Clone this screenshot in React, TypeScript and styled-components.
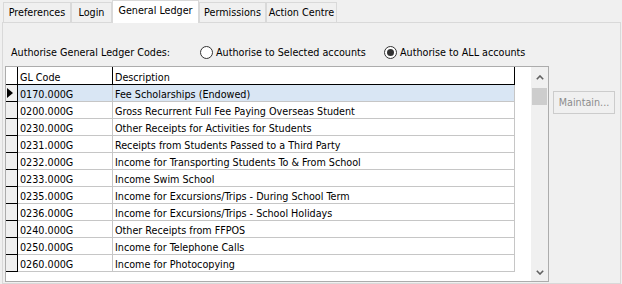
import React from 'react';
import styled, { createGlobalStyle } from 'styled-components';

const GlobalStyle = createGlobalStyle`
  html, body { margin: 0; padding: 0; background: #f0f0f0; }
  body {
    font-family: "DejaVu Sans Condensed", "DejaVu Sans", sans-serif;
    font-size: 10.7px;
    color: #000;
  }
  * { box-sizing: border-box; }
`;

const Window = styled.div`
  width: 622px;
  height: 284px;
  display: flex;
  flex-direction: column;
  overflow: hidden;
  background: #f0f0f0;
`;

const TabBar = styled.div`
  display: flex;
  align-items: flex-end;
  height: 22px;
  padding-left: 3px;
  position: relative;
  z-index: 1;
`;

const Tab = styled.div<{ $active?: boolean; $w: number }>`
  width: ${(p) => p.$w}px;
  height: ${(p) => (p.$active ? 23 : 20)}px;
  margin-bottom: ${(p) => (p.$active ? -1 : 0)}px;
  border: 1px solid #d9d9d9;
  border-bottom: none;
  background: ${(p) => (p.$active ? '#ffffff' : '#f0f0f0')};
  display: flex;
  align-items: center;
  justify-content: center;
  padding-bottom: ${(p) => (p.$active ? 3 : 0)}px;
  white-space: nowrap;
`;

const Panel = styled.div`
  margin-left: 2px;
  width: 619px;
  height: 262px;
  border: 1px solid #d9d9d9;
  padding: 21px 0 1px 2px;
  display: flex;
  flex-direction: column;
`;

const AuthRow = styled.div`
  display: flex;
  align-items: center;
  height: 17px;
  white-space: nowrap;
`;

const AuthLabel = styled.div`
  width: 195px;
  padding-left: 6px;
`;

const Option = styled.label<{ $w?: number }>`
  display: flex;
  align-items: center;
  gap: 3px;
  width: ${(p) => (p.$w ? `${p.$w}px` : 'auto')};
`;

const RadioCircle = styled.span<{ $checked?: boolean }>`
  width: 13px;
  height: 13px;
  border-radius: 50%;
  border: 1px solid #333333;
  background: #ffffff;
  display: flex;
  align-items: center;
  justify-content: center;
  &::after {
    content: '';
    width: 7px;
    height: 7px;
    border-radius: 50%;
    background: ${(p) => (p.$checked ? '#333333' : 'transparent')};
  }
`;

const Body = styled.div`
  display: flex;
  align-items: flex-start;
  margin-top: 5px;
`;

const GridBox = styled.div`
  width: 544px;
  height: 216px;
  border: 1px solid #acacac;
  display: flex;
  background: #ffffff;
`;

const Table = styled.div`
  flex: 1;
  display: flex;
  flex-direction: column;
  background: #ffffff;
`;

const HeaderRow = styled.div`
  display: flex;
  height: 18px;
`;

const Row = styled.div`
  display: flex;
  height: 17px;
`;

const IndHeader = styled.div`
  width: 12px;
  border-right: 1px solid #000;
  border-bottom: 1px solid #000;
  background: #ffffff;
`;

const HeadCell = styled.div<{ $w: number }>`
  width: ${(p) => p.$w}px;
  border-right: 1px solid #000;
  border-bottom: 1px solid #000;
  padding: 3px 0 0 2px;
  display: flex;
  align-items: center;
  white-space: nowrap;
`;

const IndCell = styled.div`
  width: 12px;
  border-right: 1px solid #000;
  border-bottom: 1px solid #000;
  background: #f0f0f0;
  display: flex;
  align-items: center;
  padding-left: 1px;
`;

const Pointer = styled.span`
  width: 0;
  height: 0;
  border-top: 5px solid transparent;
  border-bottom: 5px solid transparent;
  border-left: 6px solid #000;
`;

const Cell = styled.div<{ $w: number; $selected?: boolean }>`
  width: ${(p) => p.$w}px;
  border-right: 1px solid #c6c6c6;
  border-bottom: 1px solid #c6c6c6;
  background: ${(p) => (p.$selected ? '#d9e6f4' : '#ffffff')};
  padding: 3px 0 0 2px;
  display: flex;
  align-items: center;
  white-space: nowrap;
  overflow: hidden;
`;

const ScrollBar = styled.div`
  width: 17px;
  background: #f0f0f0;
  display: flex;
  flex-direction: column;
`;

const ScrollBtn = styled.div<{ $h: number }>`
  height: ${(p) => p.$h}px;
  display: flex;
  align-items: center;
  justify-content: center;
`;

const Thumb = styled.div`
  height: 17px;
  margin: 0 1px;
  background: #cdcdcd;
`;

const Track = styled.div`
  flex: 1;
`;

const ActionButton = styled.button`
  margin-left: 4px;
  margin-top: 25px;
  width: 62px;
  height: 23px;
  border: 1px solid #cccccc;
  background: #f0f0f0;
  color: #8c8c8c;
  font: inherit;
  padding: 0;
  white-space: nowrap;
`;

const Chevron: React.FC<{ down?: boolean }> = ({ down }) => (
  <svg width="8" height="5" viewBox="0 0 8 5">
    <path
      d={down ? 'M0.8 0.8 L4 4 L7.2 0.8' : 'M0.8 4.2 L4 1 L7.2 4.2'}
      fill="none"
      stroke="#606060"
      strokeWidth="1.6"
    />
  </svg>
);

const tabs = [
  { label: 'Preferences', w: 68 },
  { label: 'Login', w: 41 },
  { label: 'General Ledger', w: 87, active: true },
  { label: 'Permissions', w: 67 },
  { label: 'Action Centre', w: 71 },
];

const rows: [string, string][] = [
  ['0170.000G', 'Fee Scholarships (Endowed)'],
  ['0200.000G', 'Gross Recurrent Full Fee Paying Overseas Student'],
  ['0230.000G', 'Other Receipts for Activities for Students'],
  ['0231.000G', 'Receipts from Students Passed to a Third Party'],
  ['0232.000G', 'Income for Transporting Students To & From School'],
  ['0233.000G', 'Income Swim School'],
  ['0235.000G', 'Income for Excursions/Trips - During School Term'],
  ['0236.000G', 'Income for Excursions/Trips - School Holidays'],
  ['0240.000G', 'Other Receipts from FFPOS'],
  ['0250.000G', 'Income for Telephone Calls'],
  ['0260.000G', 'Income for Photocopying'],
];

export default function App() {
  return (
    <>
      <GlobalStyle />
      <Window>
        <TabBar>
          {tabs.map((t) => (
            <Tab key={t.label} $w={t.w} $active={t.active}>
              {t.label}
            </Tab>
          ))}
        </TabBar>
        <Panel>
          <AuthRow>
            <AuthLabel>Authorise General Ledger Codes:</AuthLabel>
            <Option $w={184}>
              <RadioCircle />
              Authorise to Selected accounts
            </Option>
            <Option>
              <RadioCircle $checked />
              Authorise to ALL accounts
            </Option>
          </AuthRow>
          <Body>
            <GridBox>
              <Table>
                <HeaderRow>
                  <IndHeader />
                  <HeadCell $w={95}>GL Code</HeadCell>
                  <HeadCell $w={402}>Description</HeadCell>
                </HeaderRow>
                {rows.map(([code, desc], i) => (
                  <Row key={code}>
                    <IndCell>{i === 0 && <Pointer />}</IndCell>
                    <Cell $w={95} $selected={i === 0}>
                      {code}
                    </Cell>
                    <Cell $w={402} $selected={i === 0}>
                      {desc}
                    </Cell>
                  </Row>
                ))}
              </Table>
              <ScrollBar>
                <ScrollBtn $h={21}>
                  <Chevron />
                </ScrollBtn>
                <Thumb />
                <Track />
                <ScrollBtn $h={18}>
                  <Chevron down />
                </ScrollBtn>
              </ScrollBar>
            </GridBox>
            <ActionButton disabled>Maintain...</ActionButton>
          </Body>
        </Panel>
      </Window>
    </>
  );
}
